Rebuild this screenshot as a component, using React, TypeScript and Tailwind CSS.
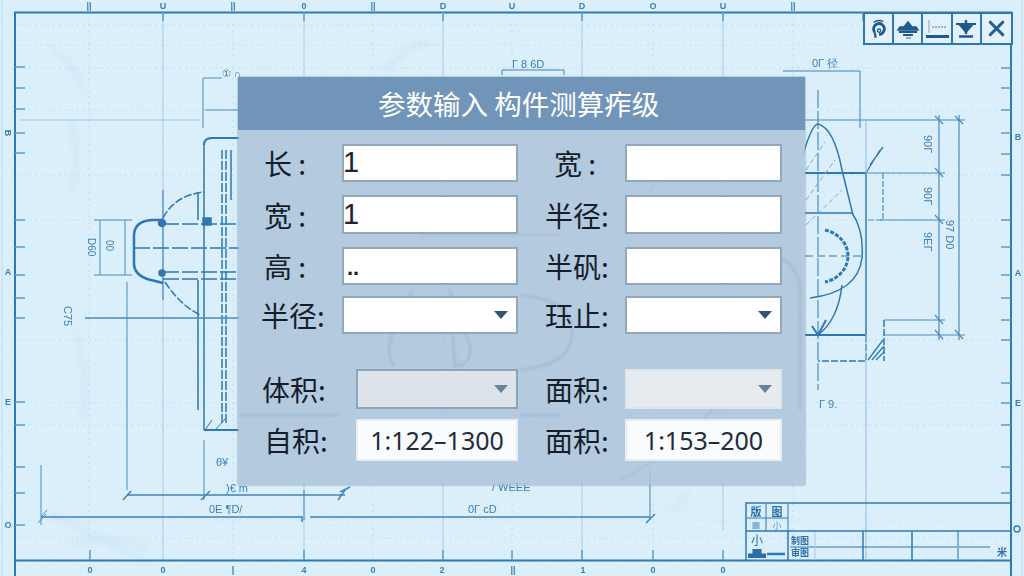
import React from "react";
import { X } from "lucide-react";

const cjk = { fontFamily: '"Noto Sans CJK SC", "Noto Sans", sans-serif' };

const topLabels: [number, string][] = [
  [89, "||"], [163, "U"], [233, "||"], [304, "0"], [373, "||"], [443, "D"], [512, "U"],
  [582, "D"], [653, "O"], [723, "U"], [793, "||"],
];
const bottomLabels: [number, string][] = [
  [90, "0"], [163, "0"], [233, "|"], [304, "4"], [373, "0"], [442, "2"], [513, "||"], [583, "1"], [653, "0"], [723, "0"],
];
const leftTicks = [67, 88, 109, 133, 153, 220, 247, 275, 298, 318, 402, 425, 467, 493, 525];
const rightTicks = [68, 88, 110, 133, 154, 175, 220, 247, 275, 298, 320, 340, 383, 403, 425, 467, 493];

function Blueprint() {
  return (
    <svg
      className="absolute inset-0 blur-[0.4px]"
      width={1024}
      height={576}
      viewBox="0 0 1024 576"
      fill="none"
      style={{ fontFamily: '"Liberation Sans", sans-serif' }}
    >
      <defs>
        <filter id="noise" x="0" y="0" width="100%" height="100%">
          <feTurbulence type="fractalNoise" baseFrequency="0.55" numOctaves="2" seed="4" />
          <feColorMatrix values="0 0 0 0 0.4  0 0 0 0 0.65  0 0 0 0 0.85  0 0 0 -1.7 0.95" />
        </filter>
        <filter id="soft">
          <feGaussianBlur stdDeviation="3" />
        </filter>
        <filter id="ghost">
          <feGaussianBlur stdDeviation="1.2" />
        </filter>
      </defs>
      <rect width="1024" height="576" fill="#dcf0fb" />
      <rect width="1024" height="576" filter="url(#noise)" opacity="0.18" />

      {/* stains */}
      <g stroke="#b5d8f0" strokeWidth="4" opacity="0.4" filter="url(#soft)">
        <path d="M50 50 Q75 60 85 95 M72 120 Q80 170 72 190 M75 330 Q90 380 82 420" />
        <path d="M50 512 Q100 540 145 560 M70 545 Q120 530 150 550" />
        <path d="M385 70 Q410 45 430 42 M670 510 Q690 500 685 490" />
      </g>

      {/* dotted construction lines */}
      <g stroke="#b3d6ee" strokeWidth="1" strokeDasharray="2 4" opacity="0.7">
        <path d="M17 25H1010M17 45H1010M17 68H1010M17 110H1010M17 175H1010M17 220H1010M17 340H1010M17 403H1010M17 425H1010M17 520H1010M17 538H1010" />
        <path d="M89 12V560M233 12V560M373 12V560M512 12V560M653 12V560M793 12V560" />
      </g>
      <path d="M163 12V560M304 12V560M443 12V560M582 12V560M723 12V530" stroke="#a3cdea" strokeWidth="1" />

      {/* faint shapes that show through the dialog */}
      <g stroke="#2f5f90" strokeWidth="3" opacity="0.7" filter="url(#ghost)">
        <path d="M395 366Q385 355 392 335L412 290M450 290L470 345Q472 366 455 366Z" />
        <path d="M520 295Q575 300 572 335Q570 365 520 370" />
        <path d="M240 415H340M520 415H560M800 410V290A50 40 0 0 0 760 250" />
        <path d="M650 190Q700 130 760 150M420 235H560M620 480Q680 450 720 400" strokeWidth="1.5" />
      </g>

      {/* sheet frame */}
      <path d="M15 576V12.5H1011V576M15 560.5H1011" stroke="#2d7ab5" strokeWidth="2" />
      <path d="M2 0V576M1022 0V576" stroke="#bfdef3" strokeWidth="1" />
      <g stroke="#5b9cc9" strokeWidth="1.5">
        {leftTicks.map((y) => (
          <path key={y} d={`M15 ${y}H25`} />
        ))}
        {rightTicks.map((y) => (
          <path key={y} d={`M1001 ${y}H1011`} />
        ))}
        {[163, 304, 443, 582, 723, 863].map((x) => (
          <path key={x} d={`M${x} 12V21`} />
        ))}
        {[90, 304, 443, 512, 582, 653, 723].map((x) => (
          <path key={x} d={`M${x} 550V560`} />
        ))}
      </g>
      <g fill="#3b7fb3" fontSize="9" textAnchor="middle">
        {topLabels.map(([x, t]) => (
          <text key={x} x={x} y={9} fontWeight="700">{t}</text>
        ))}
        {bottomLabels.map(([x, t]) => (
          <text key={x} x={x} y={573} fontWeight="700">{t}</text>
        ))}
        <text x="8" y="136" fontWeight="700" transform="rotate(90 8 133)">B</text>
        <text x="8" y="275" fontWeight="700">A</text>
        <text x="8" y="405" fontWeight="700">E</text>
        <text x="8" y="528" fontWeight="700">O</text>
        <text x="1018" y="140" fontWeight="700">B</text>
        <text x="1018" y="276" fontWeight="700">A</text>
        <text x="1018" y="406" fontWeight="700">E</text>
      </g>

      {/* part, left side */}
      <g stroke="#2f78b2" strokeWidth="1.5">
        <path d="M204 145V430M198 192V220M198 280V410M231 150V200" />
        <path d="M222 150V425M226 150V425" strokeDasharray="9 2" />
        <path d="M204 145Q204 138 212 138H240M204 430H240" strokeWidth="2" />
        <path d="M163 220H152Q134 221 134 236V264Q134 274 147 279L163 283" strokeWidth="2.5" />
        <path d="M163 224H240M163 272H240M163 279H240M134 248H240" strokeDasharray="16 3" />
        <path d="M163 218Q175 195 204 192M165 282Q180 305 200 315" strokeDasharray="8 2" />
        <path d="M163 190V300" strokeWidth="1" />
        <path d="M203 218H211V225H203Z" fill="#2f78b2" />
        <circle cx="162" cy="223" r="3.5" fill="#2f78b2" />
        <circle cx="162" cy="273" r="3" fill="#2f78b2" />
        <path d="M205 430L212 420M215 430L226 418" strokeWidth="1" />
      </g>
      <g stroke="#4a8bbd" strokeWidth="1">
        <path d="M94 220H132M94 275H132M100 220V275M125 220V275" />
        <path d="M85 318H240" strokeWidth="1.4" />
        <path d="M127 282V490M204 440V500M304 490V520" />
        <path d="M203 78V128M203 78H222M205 110H240" />
        <path d="M41 465V525M41 517L47 510M38 523L46 514" />
      </g>
      <path d="M20 120H200" stroke="#9cc8e6" strokeWidth="1" />
      <g stroke="#3f83b7" strokeWidth="1.5">
        <path d="M127 495H345" />
        <path d="M123 500L131 491M201 500L210 491M338 500L345 490" />
        <path d="M41 517H302V522M310 517H650" />
        <path d="M646 523L655 514M340 492L350 487" />
        <path d="M650 470V520" strokeWidth="1" />
      </g>
      <g fill="#3c7fb2" fontSize="11">
        <text x="222" y="77" fontSize="10">① ∩</text>
        <text x="88" y="238" fontSize="10" transform="rotate(90 88 238)">D60</text>
        <text x="106" y="240" fontSize="10" transform="rotate(90 106 240)">00</text>
        <text x="64" y="306" fontSize="11" transform="rotate(90 64 306)">C75</text>
        <text x="216" y="466" fontSize="11">θ¥</text>
        <text x="226" y="492" fontSize="11">)€ m</text>
        <text x="209" y="513" fontSize="11">0E ¶D/</text>
        <text x="468" y="513" fontSize="11">0Г cD</text>
        <text x="492" y="491" fontSize="11">/ WEEE</text>
        <text x="512" y="68" fontSize="11">Г 8 6D</text>
        <text x="812" y="67" fontSize="11">0Г 径</text>
        <text x="819" y="408" fontSize="11">Г 9.</text>
      </g>
      <path d="M502 75V70H564V75M783 71H860V128" stroke="#3f83b7" strokeWidth="1" />

      {/* part, right side */}
      <g stroke="#2f78b2" strokeWidth="1.5">
        <path d="M803 155Q812 124 818 124Q834 128 842 170L853 215" />
        <path d="M805 173H866M805 335H866M866 173V335" strokeWidth="2" />
        <path d="M866 335V361H818M884 320V361" strokeDasharray="7 2" />
        <path d="M805 213H852Q864 230 862 258Q858 292 810 298" />
        <path d="M818 90V390" strokeDasharray="18 3" strokeWidth="1" />
        <path d="M805 256H865" strokeDasharray="8 4" strokeWidth="1" />
        <path d="M825 230A30 27 0 0 1 848 256A30 27 0 0 1 825 282" strokeWidth="3" strokeDasharray="4 1.5" />
        <path d="M842 285Q838 320 818 335" />
        <path d="M866 173L880 150M870 165L883 147M868 360L883 340M872 360L884 346M876 360L884 352" strokeWidth="1.3" />
        <path d="M812 326L818 335L826 320" strokeWidth="2" />
      </g>
      <g stroke="#79aad2" strokeWidth="1">
        <path d="M806 170L825 142M806 200L835 160M806 225L842 190" strokeDasharray="5 3" />
      </g>
      <g stroke="#4a8bbd" strokeWidth="1.2">
        <path d="M805 120H965M866 173H945M880 220H945M884 320H945M884 335H965" />
        <path d="M939 115V340M959 115V340" />
        <path d="M935 116L943 124M955 116L963 124M935 168L943 177M935 215L943 224M935 315L943 324M935 330L943 339M955 330L963 339" />
        <path d="M883 173V220H867" strokeDasharray="6 2" />
        <path d="M866 120V560" strokeWidth="1" stroke="#8fbcdd" />
      </g>
      <g fill="#3c7fb2" fontSize="11">
        <text x="924" y="135" transform="rotate(90 924 135)">90Г</text>
        <text x="924" y="187" transform="rotate(90 924 187)">90Г</text>
        <text x="924" y="232" transform="rotate(90 924 232)">9ЕГ</text>
        <text x="946" y="220" transform="rotate(90 946 220)">97 D0</text>
      </g>

      {/* title block */}
      <g stroke="#2d7ab5" strokeWidth="1.5">
        <path d="M746 560V503H1011M746 531H1011M788 531V560M746 531V503" />
        <path d="M863 531V560M912 531V560M958 531V560" />
        <path d="M790 547H990" strokeWidth="1.2" />
        <path d="M747 518H788M766 504V531M788 504V531" strokeWidth="1" />
        <path d="M767 554H785" strokeWidth="2.5" />
      </g>
      <path d="M815 532V560M958 532V560" stroke="#a5cde9" strokeWidth="1" />
      <circle cx="1017" cy="529" r="3" stroke="#2d7ab5" strokeWidth="1.3" />
      <g fill="#2d6fa3" fontSize="11" textAnchor="middle" style={cjk}>
        <text x="756" y="516" fontWeight="700">版</text>
        <text x="777" y="516" fontWeight="700">图</text>
        <text x="756" y="529" fontSize="9" fill="#8ab4d4">■</text>
        <text x="777" y="529" fontSize="9" fill="#5e9cc9">小</text>
        <text x="757" y="545" fontSize="12">小</text>
        <text x="757" y="557" fontSize="9">▟▙</text>
        <text x="800" y="544" fontSize="9" fontWeight="700">制图</text>
        <text x="800" y="556" fontSize="9" fontWeight="700">审图</text>
        <text x="1002" y="556" fontSize="10" fontWeight="700">米</text>
      </g>
    </svg>
  );
}

const toolBtn = "flex h-full w-[30px] items-center justify-center border-r-2 border-[#2f78b0] last:border-r-0";

function Toolbar() {
  return (
    <div className="absolute left-[863px] top-[12px] flex h-[33px] w-[150px] border-2 border-[#2f78b0] bg-[#e2f1fb]">
      <button className={toolBtn}>
        <svg width="24" height="24" viewBox="0 0 22 22" fill="none" stroke="#1f5a8a" strokeWidth="2">
          <path d="M7 14A5 5 0 1 1 16 11Q15 16 11 16" strokeWidth="2.6" />
          <path d="M11 11a1.5 1.5 0 1 0 .1 0M6 5Q10 2 15 4" strokeWidth="1.2" />
          <path d="M7 14L8 19" strokeWidth="2" />
        </svg>
      </button>
      <button className={toolBtn}>
        <svg width="24" height="22" viewBox="0 0 24 22" fill="none" stroke="#1f5a8a" strokeWidth="1.5">
          <path d="M8 9L12 4L16 9H20L22 12H2L4 9Z" fill="#1f5a8a" />
          <path d="M3 14H21M7 17H17" strokeWidth="2" />
          <path d="M10 20H15" stroke="#94a9bb" strokeWidth="2" />
        </svg>
      </button>
      <button className={toolBtn}>
        <svg width="26" height="24" viewBox="0 0 26 24" fill="none" stroke="#1f5a8a">
          <path d="M5 3V16" stroke="#7fa3bf" strokeWidth="1" />
          <path d="M8 10H22" stroke="#7fa3bf" strokeWidth="1.5" strokeDasharray="2 1" />
          <path d="M2 19.5H25" strokeWidth="3" />
        </svg>
      </button>
      <button className={toolBtn}>
        <svg width="24" height="22" viewBox="0 0 24 22" fill="none" stroke="#1f5a8a" strokeWidth="2">
          <path d="M2 6H22" />
          <path d="M6 7L12 14L18 7Z" fill="#1f5a8a" />
          <path d="M12 2V16M5 18.5H19" strokeWidth="2.4" />
        </svg>
      </button>
      <button className={toolBtn}>
        <X size={25} strokeWidth={3} color="#235f90" />
      </button>
    </div>
  );
}

function Label({ text, pad }: { text: string; pad: string }) {
  return (
    <div className={"flex items-center whitespace-pre text-[28px] leading-none text-[#141e2b] " + pad} style={cjk}>
      {text}
    </div>
  );
}

function Arrow({ muted }: { muted?: boolean }) {
  return (
    <div
      className={
        "absolute right-[8px] top-1/2 h-0 w-0 -translate-y-1/2 border-x-[7px] border-t-[8px] border-x-transparent " +
        (muted ? "border-t-[#6c8296]" : "border-t-[#33536f]")
      }
    />
  );
}

function Input({ value, small }: { value?: string; small?: boolean }) {
  return (
    <div
      className={
        "flex items-center overflow-hidden border-2 border-[#93a7bb] bg-white text-[#1b2430] " +
        (small ? "pl-[3px] pt-[3px] text-[22px] font-bold" : "text-[29px]")
      }
      style={{ fontFamily: '"Liberation Sans", sans-serif' }}
    >
      <span className={small ? "" : "-ml-px"}>{value}</span>
    </div>
  );
}

function Select() {
  return (
    <div className="relative border-2 border-[#93a7bb] bg-white">
      <Arrow />
    </div>
  );
}

function Disabled({ bare }: { bare?: boolean }) {
  return (
    <div className={"relative border-2 " + (bare ? "border-[#dde5ec] bg-[#e6ebf0]" : "border-[#8ea3b8] bg-[#dce3ea]")}>
      <Arrow muted />
    </div>
  );
}

function Scale({ value }: { value: string }) {
  return (
    <div
      className="flex items-center justify-center border-2 border-[#e6edf3] bg-[#fafbfc] text-[25px] leading-none text-[#222d3a]"
      style={{ fontFamily: '"Noto Sans", sans-serif' }}
    >
      {value}
    </div>
  );
}

const rowCols = "grid grid-cols-[104px_176px_107px_157px] ";

export default function App() {
  return (
    <div className="relative h-[576px] w-[1024px] overflow-hidden pl-[238px] pt-[77px]">
      <Blueprint />
      <Toolbar />

      <div className="relative flex h-[408px] w-[567px] flex-col bg-[#aec5db]/88 shadow-[0_0_2px_#7d93a8]">
        <div
          className="flex h-[53px] items-center pl-[140px] text-[27.5px] leading-none text-white bg-[#7095b9]"
          style={cjk}
        >
          参数输入 构件测算痄级
        </div>

        <div className="flex flex-col pt-[14px]">
          <div className={rowCols + "h-[38px]"}>
            <Label text="长 :" pad="pl-[26px]" />
            <Input value="1" />
            <Label text="宽 :" pad="pl-[36px]" />
            <Input />
          </div>
          <div className={rowCols + "mt-[13px] h-[39px]"}>
            <Label text="宽 :" pad="pl-[26px]" />
            <Input value="1" />
            <Label text="半径:" pad="pl-[27px]" />
            <Input />
          </div>
          <div className={rowCols + "mt-[13px] h-[38px]"}>
            <Label text="高 :" pad="pl-[26px]" />
            <Input value=".." small />
            <Label text="半矾:" pad="pl-[27px]" />
            <Input />
          </div>
          <div className={rowCols + "mt-[11px] h-[38px]"}>
            <Label text="半径:" pad="pl-[23px]" />
            <Select />
            <Label text="珏止:" pad="pl-[27px]" />
            <Select />
          </div>
          <div className={rowCols + "mt-[35px] h-[40px]"}>
            <Label text="体积:" pad="pl-[24px]" />
            <div className="ml-[14px] grid">
              <Disabled />
            </div>
            <Label text="面积:" pad="pl-[27px]" />
            <Disabled bare />
          </div>
          <div className={rowCols + "mt-[10px] h-[42px]"}>
            <Label text="自积:" pad="pl-[26px]" />
            <div className="ml-[14px] grid">
              <Scale value="1:122–1300" />
            </div>
            <Label text="面积:" pad="pl-[27px]" />
            <Scale value="1:153–200" />
          </div>
        </div>
      </div>
    </div>
  );
}
